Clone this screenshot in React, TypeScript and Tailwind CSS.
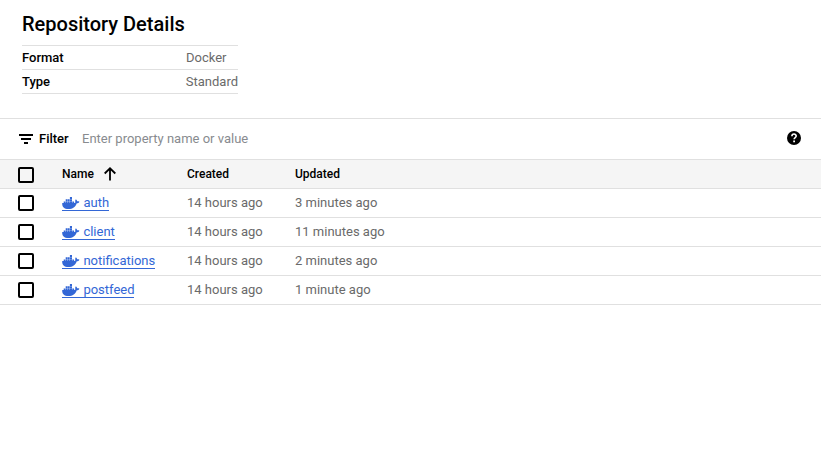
const details = [
  { label: "Format", value: "Docker" },
  { label: "Type", value: "Standard" },
];

const images = [
  { name: "auth", width: "w-[47px]", created: "14 hours ago", updated: "3 minutes ago" },
  { name: "client", width: "w-[53px]", created: "14 hours ago", updated: "11 minutes ago" },
  { name: "notifications", width: "w-[93px]", created: "14 hours ago", updated: "2 minutes ago" },
  { name: "postfeed", width: "w-[72px]", created: "14 hours ago", updated: "1 minute ago" },
];

const columns = "grid grid-cols-[62px_125px_108px_1fr] h-[29px] border-b border-[#e0e0e0]";

function Checkbox({ label, className = "" }: { label: string; className?: string }) {
  return (
    <span
      role="checkbox"
      aria-checked="false"
      aria-label={label}
      className={`ml-[18px] size-4 rounded-[2px] border-2 border-black ${className}`}
    />
  );
}

function DockerIcon() {
  return (
    <svg viewBox="0 0 18 14" className="mr-[3.4px] mt-px h-[14px] w-[18px] shrink-0" fill="currentColor">
      <path d="M7.900 1h2.100v2H7.900zM3.700 3.300h1.800v1.900H3.700zM5.800 3.300h1.800v1.900H5.800zM7.900 3.300H10v1.900H7.900zM1.700 5.500h1.700v1.700H1.700zM3.700 5.500h1.800v1.700H3.700zM5.800 5.500h1.800v1.700H5.800zM7.900 5.500H10v1.700H7.900zM10.300 5.500H12v1.700h-1.700z" />
      <path d="M.2 7H12c.7 0 1.100-.3 1.500-.7-.5-.9-.4-2.100.4-3 .8.500 1.200 1.200 1.300 2 .8-.1 1.600 0 2.200.4-.5 1-1.400 1.500-2.600 1.500-1.300 3.600-4.100 5.800-8.300 5.800C2.200 13 0 11 .2 7z" />
    </svg>
  );
}

export default function App() {
  return (
    <main className="min-h-screen bg-white font-['Roboto',sans-serif] text-[13px] leading-5 text-black">
      <section className="h-[118px] pl-[22px] pt-3">
        <h1 className="h-[33px] text-[20px] font-medium leading-6">Repository Details</h1>
        <dl className="w-[216px] border-t border-[#e0e0e0]">
          {details.map((d) => (
            <div key={d.label} className="flex h-6 border-b border-[#e0e0e0] pt-0.5">
              <dt className="w-[164px] font-medium">{d.label}</dt>
              <dd className="whitespace-nowrap text-[#6a6a6a]">{d.value}</dd>
            </div>
          ))}
        </dl>
      </section>

      <section>
        <div className="flex h-[42px] items-center border-y border-[#e0e0e0] pl-[19px] pr-[20px]">
          <svg viewBox="0 0 14 10" className="mr-1.5 h-[10px] w-[14px]" fill="currentColor" shapeRendering="crispEdges">
            <path d="M0 0h14v2H0zM2 4h10v2H2zM5 8h4v2H5z" />
          </svg>
          <span className="w-[43px] font-medium">Filter</span>
          <span className="flex-1 text-[#888b8f]">Enter property name or value</span>
          <svg viewBox="0 0 14 14" className="mb-[2px] size-[14px]">
            <circle cx="7" cy="7" r="7" />
            <path d="M4.900 5.200C4.900 2.200 9.200 2.400 9.200 5c0 1.500-2.100 1.600-2.100 3.300" fill="none" stroke="white" strokeWidth="1.600" />
            <path d="M6.200 9.500h1.800v1.800H6.200z" fill="white" />
          </svg>
        </div>

        <div className={`${columns} items-center bg-[#f5f5f5] text-[12px] font-medium`}>
          <Checkbox label="Select all" className="mt-0.5" />
          <span className="flex items-center">
            Name
            <svg viewBox="0 0 12 14" className="ml-[10px] h-[14px] w-3" fill="none" stroke="currentColor" strokeWidth="1.800">
              <path d="M6 13.500V1.500M.7 6.500L6 1.300l5.300 5.200" />
            </svg>
          </span>
          <span>Created</span>
          <span>Updated</span>
        </div>

        {images.map((image) => (
          <div key={image.name} className={`${columns} items-center text-[#6a6a6a]`}>
            <Checkbox label={`Select ${image.name}`} />
            <a className={`${image.width} flex h-4 items-center whitespace-nowrap border-b border-[#3367d6] text-[#3367d6]`}>
              <DockerIcon />
              <span>{image.name}</span>
            </a>
            <span>{image.created}</span>
            <span>{image.updated}</span>
          </div>
        ))}
      </section>
    </main>
  );
}
